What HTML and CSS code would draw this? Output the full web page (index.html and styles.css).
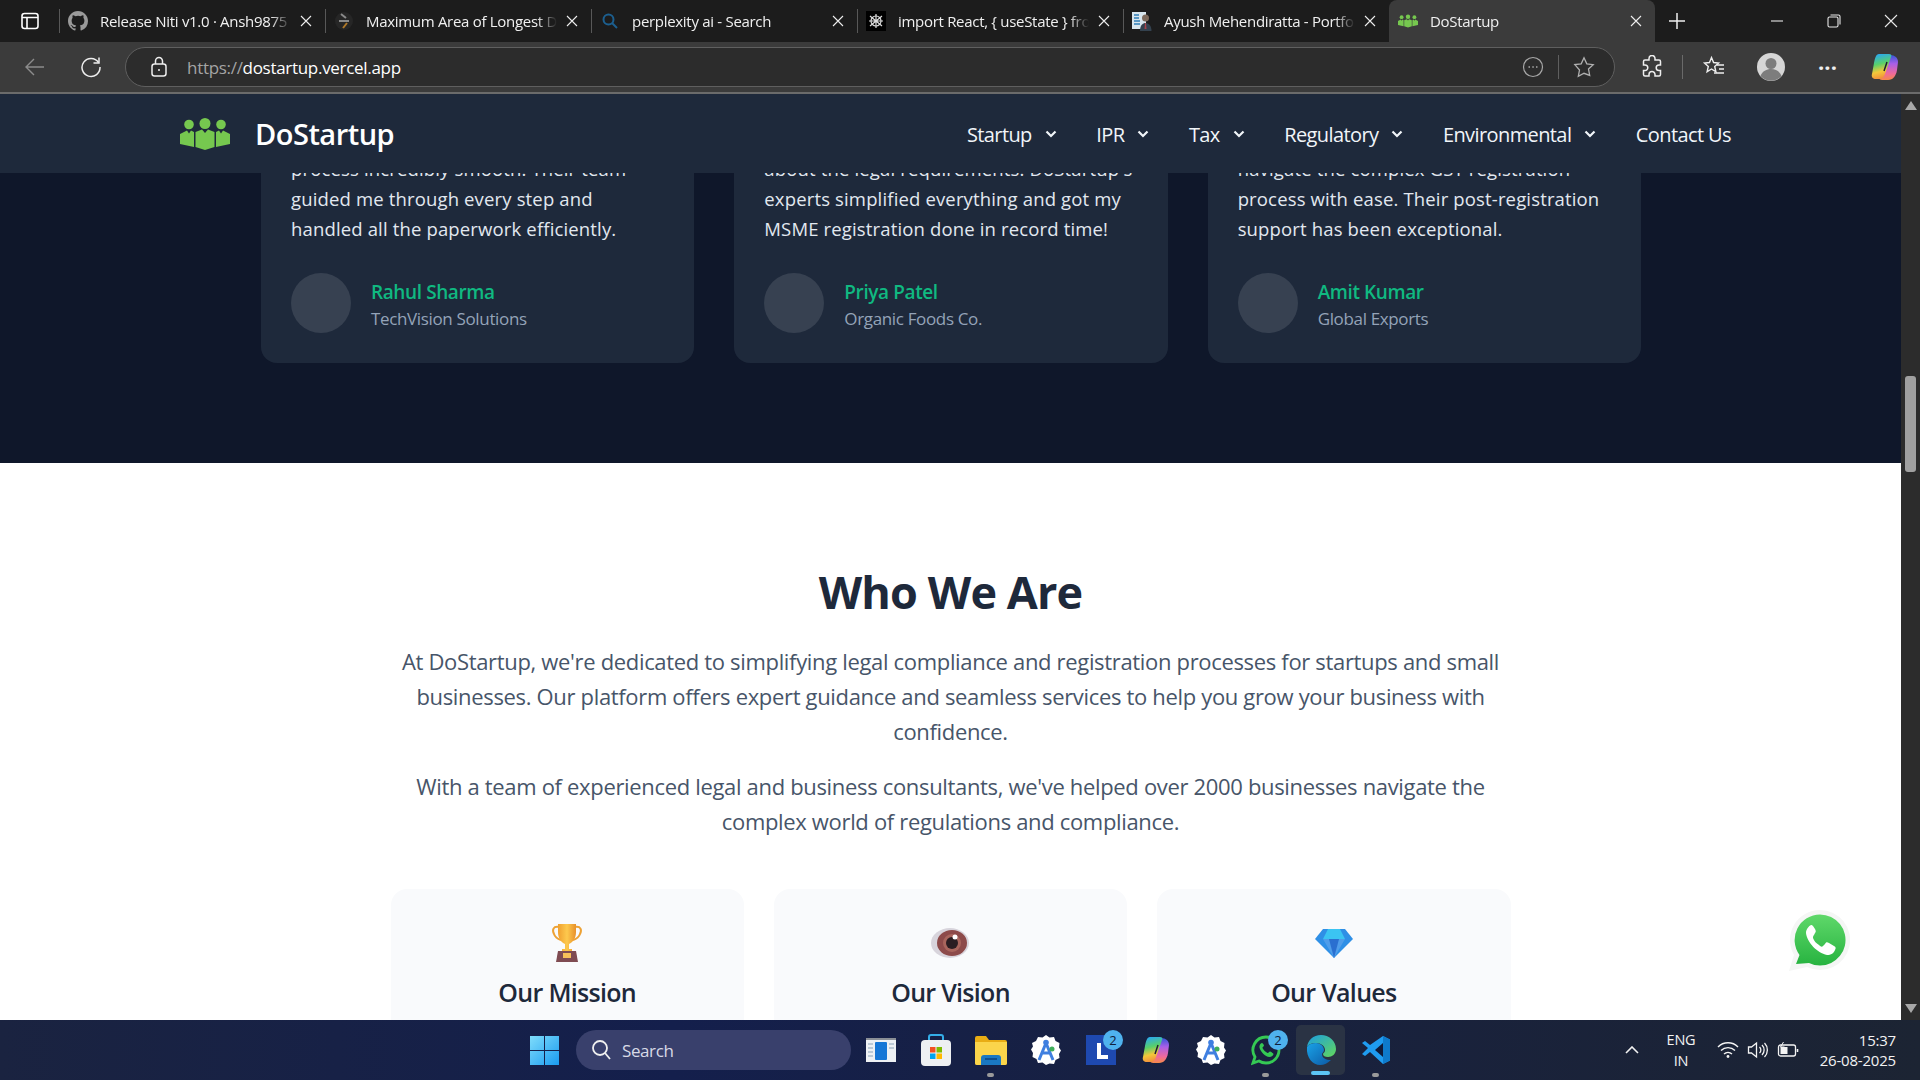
FILE: index.html
```html
<!DOCTYPE html>
<html>
<head>
    <title>DoStartup</title>
    <link rel="stylesheet" href="styles.css">
</head>
<body>
    <!-- tab strip -->
    <div class="tabstrip">
        <div class="tab-toggle">
            <svg width="20" height="20" viewBox="0 0 20 20" fill="none" stroke="#fff" stroke-width="1.6"><rect x="2" y="2.5" width="16" height="15" rx="2.5"/><path d="M2 6.5h16M7 6.5v11"/></svg>
        </div>
        <div class="tab">
            <svg class="favicon" viewBox="0 0 16 16" fill="#9a9a9a"><path d="M8 0C3.58 0 0 3.58 0 8c0 3.54 2.29 6.53 5.47 7.59.4.07.55-.17.55-.38v-1.34c-2.23.48-2.7-1.07-2.7-1.07-.36-.92-.89-1.17-.89-1.17-.73-.5.05-.49.05-.49.8.06 1.23.82 1.23.82.71 1.22 1.87.87 2.33.66.07-.52.28-.87.51-1.07-1.78-.2-3.64-.89-3.64-3.95 0-.87.31-1.59.82-2.15-.08-.2-.36-1.02.08-2.12 0 0 .67-.21 2.2.82a7.6 7.6 0 0 1 4 0c1.53-1.04 2.2-.82 2.2-.82.44 1.1.16 1.92.08 2.12.51.56.82 1.27.82 2.15 0 3.07-1.87 3.75-3.65 3.95.29.25.54.73.54 1.48v2.2c0 .21.15.46.55.38A8 8 0 0 0 16 8c0-4.42-3.58-8-8-8z"/></svg>
            <span class="tab-title">Release Niti v1.0 · Ansh9875</span>
            <svg class="tab-close" viewBox="0 0 12 12"><use href="#close-x"/></svg>
        </div>
        <div class="tab">
            <svg class="favicon" viewBox="0 0 20 20" fill="none" stroke-width="2"><circle cx="10" cy="10" r="9" fill="#262626" stroke="none"/><path d="M7 3l5 4M5 10h10" stroke="#8a8a8a"/><path d="M13 12l-4 5" stroke="#b07a2a"/></svg>
            <span class="tab-title">Maximum Area of Longest D</span>
            <svg class="tab-close" viewBox="0 0 12 12"><use href="#close-x"/></svg>
        </div>
        <div class="tab">
            <svg class="favicon" viewBox="0 0 20 20" fill="none" stroke="#1c5f8f" stroke-width="2"><circle cx="8.5" cy="8.5" r="5"/><path d="M12 12l5 5"/></svg>
            <span class="tab-title">perplexity ai - Search</span>
            <svg class="tab-close" viewBox="0 0 12 12"><use href="#close-x"/></svg>
        </div>
        <div class="tab">
            <svg class="favicon" viewBox="0 0 20 20" fill="none" stroke="#ddd" stroke-width="1.2"><rect width="20" height="20" fill="#000" stroke="none"/><circle cx="10" cy="10" r="5"/><path d="M10 3v14M4 5l12 10M16 5L4 15M3 10h14"/></svg>
            <span class="tab-title">import React, { useState } fro</span>
            <svg class="tab-close" viewBox="0 0 12 12"><use href="#close-x"/></svg>
        </div>
        <div class="tab">
            <svg class="favicon" viewBox="0 0 20 20"><rect x="0" y="1" width="14" height="17" fill="#d8e6ee"/><path d="M2 4h5M2 7h5M2 10h6M2 13h6" stroke="#2f7fb8" stroke-width="1.5"/><circle cx="13.500" cy="7" r="3.500" fill="#7d6a5c"/><path d="M8 20c0-6 3-8 5.500-8s6 2 6 8z" fill="#34424f"/><path d="M13 12h1l.5 6h-2z" fill="#a8434a"/></svg>
            <span class="tab-title">Ayush Mehendiratta - Portfo</span>
            <svg class="tab-close" viewBox="0 0 12 12"><use href="#close-x"/></svg>
        </div>
        <div class="tab tab-active">
            <svg class="favicon" viewBox="0 0 50 32" fill="#76c84f"><use href="#logo-people"/></svg>
            <span class="tab-title">DoStartup</span>
            <svg class="tab-close" viewBox="0 0 12 12"><use href="#close-x"/></svg>
        </div>
        <svg class="new-tab" width="18" height="18" viewBox="0 0 18 18" stroke="#eee" stroke-width="1.5"><path d="M9 1v16M1 9h16"/></svg>
        <div class="win-controls">
            <svg width="14" height="14" viewBox="0 0 14 14" stroke="#e8e8e8" stroke-width="1.1" fill="none"><path d="M1 7h12"/></svg>
            <svg width="14" height="14" viewBox="0 0 14 14" stroke="#e8e8e8" stroke-width="1.1" fill="none"><rect x="1" y="3" width="10" height="10" rx="1.500"/><path d="M3.500 1H11.500A1.500 1.500 0 0 1 13 2.500V10.500"/></svg>
            <svg width="14" height="14" viewBox="0 0 14 14" stroke="#e8e8e8" stroke-width="1.1" fill="none"><path d="M1 1l12 12M13 1L1 13"/></svg>
        </div>
    </div>

    <!-- address bar -->
    <div class="toolbar">
        <div class="tool-btn">
            <svg width="22" height="22" viewBox="0 0 22 22" fill="none" stroke="#8c8c8c" stroke-width="1.400"><path d="M20 11H2M10 3l-8 8 8 8"/></svg>
        </div>
        <div class="tool-btn">
            <svg width="22" height="22" viewBox="0 0 22 22" fill="none" stroke="#eee" stroke-width="1.500"><path d="M18.500 6.500A9 9 0 1 0 20 11"/><path d="M19 1.500v5.500h-5.500"/></svg>
        </div>
        <div class="address">
            <svg class="lock" width="18" height="22" viewBox="0 0 18 22" fill="none" stroke="#eee" stroke-width="1.500"><rect x="2" y="8" width="14" height="12" rx="2.500"/><path d="M5.500 8V5a3.500 3.500 0 0 1 7 0v3"/><circle cx="9" cy="14" r="1" fill="#eee" stroke="none"/></svg>
            <span class="url"><span class="url-scheme">https://</span>dostartup.vercel.app</span>
            <svg class="addr-right" width="22" height="22" viewBox="0 0 22 22" fill="none" stroke="#a8a8a8" stroke-width="1.200"><circle cx="11" cy="11" r="9.500"/><path d="M6.500 11h1.500M10.300 11h1.500M14 11h1.500" stroke-width="1.600"/></svg>
            <span class="addr-sep"></span>
            <svg width="22" height="22" viewBox="0 0 22 22" fill="none" stroke="#b0b0b0" stroke-width="1.300"><path d="M11 1.800l2.800 6 6.400.8-4.700 4.400 1.200 6.400L11 17.300l-5.700 3.100 1.200-6.400L1.800 8.600l6.400-.8z"/></svg>
        </div>
        <div class="tool-btn tool-right">
            <svg width="22" height="24" viewBox="0 0 22 24" fill="none" stroke="#eee" stroke-width="1.500"><path d="M8 3.500a3 3 0 0 1 6 0V5h4a1.500 1.500 0 0 1 1.500 1.500V10H18a2.800 2.800 0 0 0 0 5.600h1.500v3.900A1.500 1.500 0 0 1 18 21h-4v-1.500a3 3 0 0 0-6 0V21H4a1.500 1.500 0 0 1-1.500-1.500v-4H4a2.800 2.800 0 0 0 0-5.600H2.500V6.500A1.500 1.500 0 0 1 4 5h4z"/></svg>
        </div>
        <span class="tool-sep"></span>
        <div class="tool-btn tool-right">
            <svg width="24" height="24" viewBox="0 0 24 24" fill="none" stroke="#eee" stroke-width="1.400"><path d="M9.500 2.500l2.100 5 5 .5-3.900 3.500 1.200 5.300-4.400-2.800-4.400 2.800 1.200-5.300L2.500 8l5-.5z"/><path d="M15 12h7M17 16h5M12 20h10" transform="translate(0 -2)"/></svg>
        </div>
        <div class="tool-btn tool-right">
            <svg width="30" height="30" viewBox="0 0 30 30"><circle cx="15" cy="15" r="14" fill="#d6d6d6"/><circle cx="15" cy="11.500" r="5.500" fill="#7d7d7d"/><path d="M4.500 24c2-5 6-7 10.500-7s8.500 2 10.500 7a14 14 0 0 1-21 0z" fill="#7d7d7d"/></svg>
        </div>
        <div class="tool-btn tool-right tool-dots">···</div>
        <div class="tool-btn tool-right">
            <svg width="28" height="30" viewBox="0 0 28 30"><use href="#copilot"/></svg>
        </div>
    </div>

    <div class="viewport">
        <div class="page">
            <nav class="navbar">
                <svg class="logo" width="50" height="32" viewBox="0 0 50 32" fill="#76c84f"><use href="#logo-people"/></svg>
                <span class="brand">DoStartup</span>
                <ul class="nav-links">
                    <li>Startup <svg class="chev" viewBox="0 0 12 8"><path d="M1.500 1.500L6 6l4.500-4.500"/></svg></li>
                    <li>IPR <svg class="chev" viewBox="0 0 12 8"><path d="M1.500 1.500L6 6l4.500-4.500"/></svg></li>
                    <li>Tax <svg class="chev" viewBox="0 0 12 8"><path d="M1.500 1.500L6 6l4.500-4.500"/></svg></li>
                    <li>Regulatory <svg class="chev" viewBox="0 0 12 8"><path d="M1.500 1.500L6 6l4.500-4.500"/></svg></li>
                    <li>Environmental <svg class="chev" viewBox="0 0 12 8"><path d="M1.500 1.500L6 6l4.500-4.500"/></svg></li>
                    <li>Contact Us</li>
                </ul>
            </nav>

            <div class="scroll">
                <section class="testimonials">
                    <div class="testimonial-card">
                        <p class="quote">process incredibly smooth. Their team<br>guided me through every step and<br>handled all the paperwork efficiently.</p>
                        <div class="person">
                            <div class="avatar"></div>
                            <div class="person-info">
                                <div class="person-name">Rahul Sharma</div>
                                <div class="person-org">TechVision Solutions</div>
                            </div>
                        </div>
                    </div>
                    <div class="testimonial-card">
                        <p class="quote">about the legal requirements. DoStartup's<br>experts simplified everything and got my<br>MSME registration done in record time!</p>
                        <div class="person">
                            <div class="avatar"></div>
                            <div class="person-info">
                                <div class="person-name">Priya Patel</div>
                                <div class="person-org">Organic Foods Co.</div>
                            </div>
                        </div>
                    </div>
                    <div class="testimonial-card">
                        <p class="quote">navigate the complex GST registration<br>process with ease. Their post-registration<br>support has been exceptional.</p>
                        <div class="person">
                            <div class="avatar"></div>
                            <div class="person-info">
                                <div class="person-name">Amit Kumar</div>
                                <div class="person-org">Global Exports</div>
                            </div>
                        </div>
                    </div>
                </section>

                <section class="about">
                    <h2>Who We Are</h2>
                    <p>At DoStartup, we're dedicated to simplifying legal compliance and registration processes for startups and small<br>businesses. Our platform offers expert guidance and seamless services to help you grow your business with<br>confidence.</p>
                    <p>With a team of experienced legal and business consultants, we've helped over 2000 businesses navigate the<br>complex world of regulations and compliance.</p>
                    <div class="about-cards">
                        <div class="about-card">
                            <svg class="about-icon" width="32" height="38" viewBox="0 0 32 38">
                                <defs><linearGradient id="gold" x1="0" x2="1"><stop offset="0" stop-color="#f0a030"/><stop offset=".5" stop-color="#fdc94e"/><stop offset="1" stop-color="#e8902a"/></linearGradient></defs>
                                <path d="M8 3C2 2 1 6 3 10c1 3 4 5 7 6M24 3c6-1 7 3 5 7-1 3-4 5-7 6" fill="none" stroke="#eda134" stroke-width="2"/>
                                <path d="M7 0h18v8c0 6-3 10-7 12v5h3v2H11v-2h3v-5C10 18 7 14 7 8z" fill="url(#gold)"/>
                                <path d="M7 27h18l2 11H5z" fill="#7f4b52"/>
                                <rect x="12" y="29" width="8" height="5" fill="#f8c05a"/>
                            </svg>
                            <h3>Our Mission</h3>
                        </div>
                        <div class="about-card">
                            <svg class="about-icon" width="38" height="30" viewBox="0 0 38 30">
                                <ellipse cx="19" cy="15" rx="19" ry="15" fill="#d8d4dc"/>
                                <ellipse cx="21" cy="15" rx="15" ry="13" fill="#8d4a4a"/>
                                <ellipse cx="21" cy="15" rx="9" ry="9" fill="#a9655d"/>
                                <ellipse cx="21" cy="15" rx="6" ry="6" fill="#2a1d22"/>
                                <circle cx="24" cy="9" r="2.500" fill="#fff"/>
                            </svg>
                            <h3>Our Vision</h3>
                        </div>
                        <div class="about-card">
                            <svg class="about-icon" width="38" height="30" viewBox="0 0 38 30">
                                <path d="M8 1h22l8 10-19 19L0 11z" fill="#2f8fe6"/>
                                <path d="M13 1h12l5 10H8z" fill="#3bc4f2"/>
                                <path d="M8 11h22L19 30z" fill="#4f9dea"/>
                                <path d="M14 11h10l-5 19z" fill="#2a6fd0"/>
                            </svg>
                            <h3>Our Values</h3>
                        </div>
                    </div>
                </section>
            </div>

            <!-- floating whatsapp button -->
            <svg class="whatsapp" width="61" height="61" viewBox="0 0 61 61">
                <defs><linearGradient id="wa" x1="0" y1="0" x2="0" y2="1"><stop offset="0" stop-color="#5fd86a"/><stop offset="1" stop-color="#27b340"/></linearGradient></defs>
                <path d="M31 0a30 30 0 1 1-13 57L0 61l5-16A30 30 0 0 1 31 0z" fill="#f5f6f5"/>
                <path d="M31 4.500a25.500 25.500 0 1 1-11 48.500L7 54l3.500-9A25.500 25.500 0 0 1 31 4.500z" fill="url(#wa)"/>
                <path d="M22 15c-2 1-5 4-5 8 1 9 11 20 21 22 4 0 7-2 8-5 1-2 1-3-1-4l-5-3c-2-1-3-1-4 1l-2 2c-1 1-2 1-4-1-3-2-5-4-6-7 0-1 0-2 1-3l1-2c1-1 1-2 0-4l-2-3c-1-1-1-1-2-1z" fill="#fff"/>
            </svg>
        </div>

        <div class="scrollbar">
            <span class="sb-up"></span>
            <span class="sb-thumb"></span>
            <span class="sb-down"></span>
        </div>
    </div>

    <!-- taskbar -->
    <div class="taskbar">
        <svg class="start" width="29" height="29" viewBox="0 0 29 29"><defs><linearGradient id="win" x1="0" y1="0" x2="1" y2="1"><stop offset="0" stop-color="#7fdcfb"/><stop offset="1" stop-color="#1a9bf0"/></linearGradient></defs><path d="M0 0h14v14H0zM15 0h14v14H15zM0 15h14v14H0zM15 15h14v14H15z" fill="url(#win)"/></svg>
        <div class="search">
            <svg width="20" height="22" viewBox="0 0 20 22" fill="none" stroke="#f0f0f0" stroke-width="1.800"><circle cx="9" cy="9" r="7"/><path d="M14 14l5 6"/></svg>
            <span>Search</span>
        </div>
        <div class="task-icons">
            <div class="task-icon">
                <svg width="30" height="24" viewBox="0 0 30 24"><rect width="30" height="24" fill="#eef1f4"/><rect width="30" height="2" fill="#8a8f96"/><rect x="9" y="4" width="12" height="18" rx="1" fill="#1677d6"/><path d="M2 6h5M2 10h5M2 14h5M2 18h5M23 6h5M23 10h5" stroke="#8aa3b8" stroke-width="1.200"/></svg>
            </div>
            <div class="task-icon">
                <svg width="30" height="32" viewBox="0 0 30 32"><path d="M8 8V3a2 2 0 0 1 2-2h10a2 2 0 0 1 2 2v5" fill="none" stroke="#34aee8" stroke-width="2"/><rect y="6" width="30" height="26" rx="4" fill="#eef0f2"/><path d="M9 13h5.500v5.500H9z" fill="#f25022"/><path d="M15.500 13H21v5.500h-5.500z" fill="#7fba00"/><path d="M9 19.500h5.500V25H9z" fill="#00a4ef"/><path d="M15.500 19.500H21V25h-5.500z" fill="#ffb900"/></svg>
            </div>
            <div class="task-icon has-dot">
                <svg width="32" height="30" viewBox="0 0 32 30"><path d="M0 3a2 2 0 0 1 2-2h9l3 4h16a2 2 0 0 1 2 2v21a2 2 0 0 1-2 2H2a2 2 0 0 1-2-2z" fill="#e9ad14"/><path d="M0 7h32v21a2 2 0 0 1-2 2H2a2 2 0 0 1-2-2z" fill="#fbd54b"/><path d="M6 30v-7a3 3 0 0 1 3-3h14a3 3 0 0 1 3 3v7z" fill="#1a78c2"/><rect x="10" y="23" width="12" height="2" fill="#0d4f8f"/></svg>
            </div>
            <div class="task-icon">
                <svg width="30" height="32" viewBox="0 0 30 32"><use href="#studio-badge"/></svg>
            </div>
            <div class="task-icon">
                <svg width="30" height="30" viewBox="0 0 30 30"><rect width="30" height="30" fill="#1e49b0"/><path d="M11 8h4v12h7v4H11z" fill="#fff"/></svg>
                <span class="badge">2</span>
            </div>
            <div class="task-icon">
                <svg width="28" height="30" viewBox="0 0 28 30"><use href="#copilot"/></svg>
            </div>
            <div class="task-icon">
                <svg width="30" height="32" viewBox="0 0 30 32"><use href="#studio-badge"/></svg>
            </div>
            <div class="task-icon has-dot">
                <svg width="30" height="32" viewBox="0 0 30 32" fill="none"><path d="M15 3a13 13 0 0 1 0 26c-3 0-5-.7-7-2l-6 2 2-6A13 13 0 0 1 15 3z" stroke="#35c954" stroke-width="2.800"/><path d="M11 9c-1 0-3 2-2.500 4.500C9.500 18 14 22.500 18.500 23c2.500 0 4-2 4-3 0-.7-3-2.500-3.500-2.500-1 0-1.500 2-2.500 1.500-2-1-4-3-5-5-.3-1 1.500-1.500 1.500-2.500S11.500 9 11 9z" fill="#35c954"/></svg>
                <span class="badge">2</span>
            </div>
            <div class="task-icon task-active">
                <svg width="30" height="32" viewBox="0 0 30 32">
                    <defs>
                        <linearGradient id="edge" x1="0" y1="0" x2="1" y2="1"><stop offset="0" stop-color="#1aa3e8"/><stop offset="1" stop-color="#0c59a4"/></linearGradient>
                        <linearGradient id="edge2" x1="0" y1="0" x2="1" y2="1"><stop offset="0" stop-color="#1b9de2"/><stop offset="1" stop-color="#63d85a"/></linearGradient>
                    </defs>
                    <path d="M15 1c8 0 15 6 15 14 0 5-4 8-8 8-3 0-5-1-5-3 0-1 2-1 2-4 0-4-4-7-9-7C5 9 2 11 1 13 2 6 7 1 15 1z" fill="url(#edge2)"/>
                    <path d="M1 13c2-3 5-4 9-4 4 0 8 3 8 7 0 2-2 3-2 4 0 4 4 6 9 6-3 3-7 5-11 5C7 31 0 24 1 13z" fill="url(#edge)"/>
                </svg>
                <span class="active-bar"></span>
            </div>
            <div class="task-icon has-dot">
                <svg width="30" height="30" viewBox="0 0 30 30"><path d="M22 1l7 3.500v21L22 29 9 17l-5 4-3-2 6-6-6-5 3-2 5 4z" fill="#1f9cf0"/><path d="M22 8l-8 7 8 7z" fill="#0f1a38"/><path d="M22 1l7 3.500v21L22 29z" fill="#0e7acb"/></svg>
            </div>
        </div>
        <div class="tray">
            <svg class="tray-chev" width="14" height="8" viewBox="0 0 14 8" fill="none" stroke="#f2f2f2" stroke-width="1.600"><path d="M1 7l6-6 6 6"/></svg>
            <div class="lang">ENG<br>IN</div>
            <svg class="tray-icon" width="22" height="18" viewBox="0 0 22 18" fill="none" stroke="#f4f4f4" stroke-width="1.400"><path d="M1 6a14 14 0 0 1 20 0M4 9.500a10 10 0 0 1 14 0M7 13a6 6 0 0 1 8 0"/><circle cx="11" cy="15.500" r="1.400" fill="#f4f4f4" stroke="none"/></svg>
            <svg class="tray-icon" width="21" height="18" viewBox="0 0 21 18" fill="none" stroke="#f4f4f4" stroke-width="1.300"><path d="M1 6h3l5-4v14l-5-4H1z"/><path d="M12 6a4 4 0 0 1 0 6M14.500 4a7 7 0 0 1 0 10M17 2a10 10 0 0 1 0 14"/></svg>
            <svg class="tray-icon" width="21" height="16" viewBox="0 0 21 16" fill="none" stroke="#f4f4f4" stroke-width="1.300"><rect x="1" y="3" width="17" height="11" rx="2"/><path d="M20 7v3" stroke-width="1.600"/><rect x="3" y="5" width="7" height="7" fill="#f4f4f4" stroke="none"/><path d="M6 0L3 5h4L4 9" stroke-width="1"/></svg>
            <div class="clock">15:37<br>26-08-2025</div>
        </div>
    </div>

    <!-- shared shapes -->
    <svg class="defs" width="0" height="0">
        <defs>
            <path id="close-x" d="M1 1l10 10M11 1L1 11" fill="none" stroke="#eee" stroke-width="1.100"/>
            <g id="logo-people">
                <circle cx="9" cy="6.500" r="4.800"/><circle cx="25" cy="5.500" r="5.500"/><circle cx="41" cy="6.500" r="4.800"/>
                <path d="M0 16l7-3.500 2 3 2-3 3 1.500v15L0 26z"/>
                <path d="M50 16l-7-3.500-2 3-2-3-3 1.500v15l14-3z"/>
                <path d="M15.500 14l6.500-2.500 3 3.500 3-3.500 6.500 2.500v15L25 32l-9.500-3z"/>
            </g>
            <g id="studio-badge">
                <path d="M15 1l3.500 2.500 4.500-.5 1.500 4 4 2-.5 4.500 2 3-2 3.500.5 4-4 2-1.500 4-4.500-.5L15 31l-3.500-2.500-4.500.5-1.500-4-4-2 .5-4-2-3.500 2-3L1 9l4-2L7 3l4.500.5z" fill="#fff"/>
                <circle cx="15" cy="8.500" r="2.800" fill="#3f7fe0"/>
                <path d="M15 9L8 26M15 9l7 17M10 19h10" fill="none" stroke="#3f7fe0" stroke-width="3"/>
                <circle cx="21" cy="15" r="2.500" fill="#3fae5a"/>
            </g>
            <linearGradient id="cp1" x1="0.300" y1="0" x2="0.500" y2="1"><stop offset="0" stop-color="#2aa8f2"/><stop offset=".4" stop-color="#58d06a"/><stop offset=".7" stop-color="#f3c83a"/><stop offset="1" stop-color="#f28a3c"/></linearGradient>
            <linearGradient id="cp2" x1="0.500" y1="0" x2="0.500" y2="1"><stop offset="0" stop-color="#3557d6"/><stop offset=".35" stop-color="#a85fe8"/><stop offset=".75" stop-color="#f06a9a"/><stop offset="1" stop-color="#f58a48"/></linearGradient>
            <g id="copilot">
                <path d="M19 3c5 0 8 3 8 7l-1 8c-1 6-4 10-9 10h-6c-3 0-4-3-3-5z" fill="url(#cp2)"/>
                <path d="M8 2h10c2 0 3 1 2 3l-6 17c-1 3-3 5-6 5H5c-3 0-5-2-4-5l2-11C4 6 5 2 8 2z" fill="url(#cp1)"/>
                <path d="M16 10l-3 9" stroke="#1b1f30" stroke-width="1.500"/>
            </g>
        </defs>
    </svg>
</body>
</html>
```

FILE: styles.css
```css
* {
  box-sizing: border-box;
}

body {
  margin: 0;
  width: 1920px;
  height: 1080px;
  overflow: hidden;
  font-family: "Open Sans", "Noto Sans", sans-serif;
  background-color: #fff;
}

/* tab strip */
.tabstrip {
  height: 42px;
  display: flex;
  align-items: center;
  background-color: #1c1c1c;
  color: #f0f0f0;
}

.tab-toggle {
  width: 59px;
  display: flex;
  justify-content: center;
}

.tab {
  width: 266px;
  height: 42px;
  display: flex;
  align-items: center;
  padding: 0 13px 0 9px;
  position: relative;
  font-size: 15px;
  letter-spacing: -0.3px;
}

.tab::before {
  content: "";
  position: absolute;
  left: 0;
  top: 9px;
  bottom: 9px;
  width: 1px;
  background-color: #585858;
}

.tab-active {
  background-color: #3b3b3b;
  border-radius: 8px 8px 0 0;
}

.tab-active::before {
  display: none;
}

.favicon {
  width: 20px;
  height: 20px;
  flex: none;
  margin-right: 12px;
}

.tab-title {
  flex: 1;
  overflow: hidden;
  white-space: nowrap;
  -webkit-mask-image: linear-gradient(to left, transparent 0, #000 20px);
  mask-image: linear-gradient(to left, transparent 0, #000 20px);
}

.tab-close {
  width: 12px;
  height: 12px;
  flex: none;
  margin-left: 9px;
}

.new-tab {
  margin-left: 13px;
}

.win-controls {
  margin-left: auto;
  width: 150px;
  padding-right: 22px;
  display: flex;
  justify-content: space-between;
}

/* address bar */
.toolbar {
  height: 52px;
  display: flex;
  align-items: center;
  padding: 0 0 0 7px;
  background-color: #3b3b3b;
  border-bottom: 2px solid #6b6b6b;
}

.tool-btn {
  width: 56px;
  display: flex;
  justify-content: center;
  flex: none;
}

.tool-right {
  width: 57px;
}

.address {
  width: 1490px;
  height: 40px;
  margin-left: 6px;
  margin-right: 8px;
  display: flex;
  align-items: center;
  padding: 0 19px 0 24px;
  background-color: #2c2c2c;
  border: 1.5px solid #5f5f5f;
  border-radius: 20px;
  flex: none;
}

.url {
  margin-left: 19px;
  font-size: 17px;
  letter-spacing: -0.3px;
  color: #fff;
}

.url-scheme {
  color: #a4a4a4;
}

.addr-right {
  margin-left: auto;
}

.addr-sep {
  width: 1px;
  height: 24px;
  background-color: #5f5f5f;
  margin: 0 14px;
}

.tool-sep {
  width: 1px;
  height: 24px;
  background-color: #6a6a6a;
  flex: none;
  margin: 0 2px;
}

.tool-dots {
  color: #eee;
  font-size: 22px;
  font-weight: 700;
  line-height: 22px;
}

/* page */
.viewport {
  height: 926px;
  display: flex;
}

.page {
  flex: 1;
  display: flex;
  flex-direction: column;
  position: relative;
  overflow: hidden;
}

.navbar {
  height: 79px;
  flex: none;
  display: flex;
  align-items: center;
  padding: 0 170px 0 180px;
  background-color: #1e293b;
  color: #fff;
  z-index: 2;
}

.brand {
  margin-left: 25px;
  font-size: 29px;
  font-weight: 600;
  letter-spacing: -0.5px;
}

.nav-links {
  list-style: none;
  display: flex;
  gap: 39.500px;
  margin: 0 0 0 auto;
  padding: 1px 0 0;
  font-size: 20px;
  letter-spacing: -0.6px;
  color: #f1f5f9;
}

.nav-links li {
  display: flex;
  align-items: center;
  gap: 13px;
}

.chev {
  width: 12px;
  height: 8px;
  fill: none;
  stroke: #f1f5f9;
  stroke-width: 2.200;
}

.scroll {
  flex: 1;
  overflow: hidden;
}

.testimonials {
  margin-top: -19px;
  padding: 0 260px 100px 261px;
  display: grid;
  grid-template-columns: repeat(3, 1fr);
  gap: 40px;
  background-color: #0f172a;
}

.testimonial-card {
  padding: 0 30px 30px;
  background-color: #1e293b;
  border-radius: 0 0 16px 16px;
}

.quote {
  margin: 0 0 29px;
  font-size: 18.500px;
  line-height: 30px;
  letter-spacing: 0.15px;
  color: #e2e8f0;
  white-space: nowrap;
}

.person {
  display: flex;
  align-items: center;
  gap: 20px;
}

.person-info {
  padding-top: 6px;
}

.avatar {
  width: 60px;
  height: 60px;
  border-radius: 50%;
  background-color: #374151;
}

.person-name {
  font-size: 19px;
  font-weight: 600;
  line-height: 26px;
  letter-spacing: -0.4px;
  color: #10b981;
}

.person-org {
  font-size: 17px;
  line-height: 28px;
  letter-spacing: -0.35px;
  color: #94a3b8;
}

.about {
  padding: 98px 0 0;
  text-align: center;
}

.about h2 {
  margin: 0 0 21px;
  font-size: 45px;
  line-height: 62px;
  font-weight: 700;
  letter-spacing: -0.9px;
  color: #1e293b;
}

.about p {
  margin: 0 0 20px;
  font-size: 22px;
  line-height: 35px;
  letter-spacing: -0.33px;
  color: #475569;
}

.about-cards {
  width: 1120px;
  margin: 50px auto 0;
  display: grid;
  grid-template-columns: repeat(3, 1fr);
  gap: 30px;
}

.about-card {
  height: 300px;
  padding-top: 35px;
  background-color: #f9fafc;
  border-radius: 16px;
  display: flex;
  flex-direction: column;
  align-items: center;
}

.about-icon {
  height: 38px;
}

.about-card h3 {
  margin: 12px 0 0;
  font-size: 25px;
  line-height: 36px;
  font-weight: 600;
  letter-spacing: -0.7px;
  color: #1e293b;
}

.whatsapp {
  position: absolute;
  right: 51px;
  bottom: 49px;
  z-index: 3;
}

/* scrollbar */
.scrollbar {
  width: 19px;
  flex: none;
  background-color: #2c2c2c;
  display: flex;
  flex-direction: column;
  align-items: center;
  padding: 7px 0;
}

.sb-up {
  width: 0;
  height: 0;
  border: 6px solid transparent;
  border-top: 0;
  border-bottom: 9px solid #a8a8a8;
}

.sb-thumb {
  width: 11px;
  height: 96px;
  margin-top: 266px;
  background-color: #a0a0a0;
  border-radius: 3px;
}

.sb-down {
  width: 0;
  height: 0;
  margin-top: auto;
  border: 6px solid transparent;
  border-bottom: 0;
  border-top: 9px solid #a8a8a8;
}

/* taskbar */
.taskbar {
  height: 60px;
  display: flex;
  align-items: center;
  padding: 0 24px 0 530px;
  background: linear-gradient(to right, #1a2340 0%, #141f4c 35%, #18213f 65%, #1c2433 100%);
  color: #f2f2f2;
}

.search {
  width: 275px;
  height: 40px;
  margin-left: 17px;
  padding-left: 15px;
  display: flex;
  align-items: center;
  gap: 11px;
  background-color: #39406c;
  border-radius: 20px;
  font-size: 17px;
  letter-spacing: -0.4px;
  color: #d8dae6;
}

.task-icons {
  display: flex;
  margin-left: 2px;
}

.task-icon {
  width: 55px;
  height: 60px;
  display: flex;
  align-items: center;
  justify-content: center;
  position: relative;
}

.has-dot::after {
  content: "";
  position: absolute;
  left: 24px;
  bottom: 3px;
  width: 7px;
  height: 4px;
  border-radius: 2px;
  background-color: #9a9a9a;
}

.task-active::before {
  content: "";
  position: absolute;
  left: 3px;
  right: 3px;
  top: 5px;
  bottom: 5px;
  border-radius: 5px;
  background-color: #2a3344;
}

.task-active svg {
  position: relative;
}

.active-bar {
  position: absolute;
  left: 18px;
  bottom: 5px;
  width: 19px;
  height: 4px;
  border-radius: 2px;
  background-color: #5cc5f5;
}

.badge {
  position: absolute;
  top: 10px;
  right: 5px;
  width: 20px;
  height: 20px;
  border-radius: 50%;
  background-color: #4fb2ee;
  color: #10203a;
  font-size: 13px;
  line-height: 20px;
  text-align: center;
}

.tray {
  margin-left: auto;
  display: flex;
  align-items: center;
}

.tray-chev {
  margin-right: 14px;
}

.lang {
  width: 56px;
  text-align: center;
  font-size: 14.500px;
  line-height: 21px;
  letter-spacing: -0.2px;
}

.tray-icon {
  margin-left: 8px;
  width: 22px;
}

.clock {
  width: 97px;
  text-align: right;
  font-size: 15px;
  line-height: 20px;
  letter-spacing: -0.2px;
}

.defs {
  position: absolute;
}
```
